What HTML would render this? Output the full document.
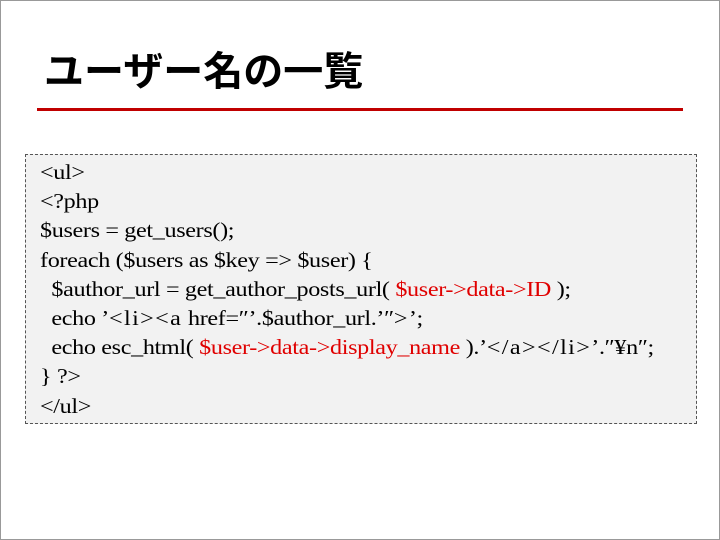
<!DOCTYPE html>
<html><head><meta charset="utf-8"><style>
body{margin:0;width:720px;height:540px;background:#fff;overflow:hidden;position:relative}
.frame{position:absolute;left:0;top:0;width:718px;height:538px;border:1px solid #999}
h1{position:absolute;left:44px;top:46px;margin:0;font:bold 40px/52px "Liberation Sans","Noto Sans CJK JP",sans-serif;color:#000}
.rule{position:absolute;left:37px;top:108px;width:646px;height:3px;background:#c00000}
.box{position:absolute;left:25px;top:154px;width:670px;height:268px;border:1px dashed #555;background:#f2f2f2}
.code{position:absolute;left:40px;top:158px;font:21px/29.2px "Liberation Serif","Noto Serif CJK SC",serif;color:#000;white-space:pre;letter-spacing:-0.3px;transform:scaleX(1.15);transform-origin:0 0}
.r{color:#e00000}
.b{letter-spacing:1.2px}
</style></head><body>
<div class="frame"></div>
<h1>ユーザー名の一覧</h1>
<div class="rule"></div>
<div class="box"></div>
<div class="code">&lt;ul&gt;
&lt;?php
$users = get_users();
foreach ($users as $key =&gt; $user) {
  $author_url = get_author_posts_url( <span class="r">$user-&gt;data-&gt;ID</span> );
  echo ’<span class="b">&lt;li&gt;&lt;a</span> href=″’.$author_url.’″<span class="b">&gt;</span>’;
  echo esc_html( <span class="r">$user-&gt;data-&gt;display_name</span> ).’<span class="b">&lt;/a&gt;&lt;/li&gt;</span>’.″¥n″;
} ?&gt;
&lt;/ul&gt;</div>
</body></html>
